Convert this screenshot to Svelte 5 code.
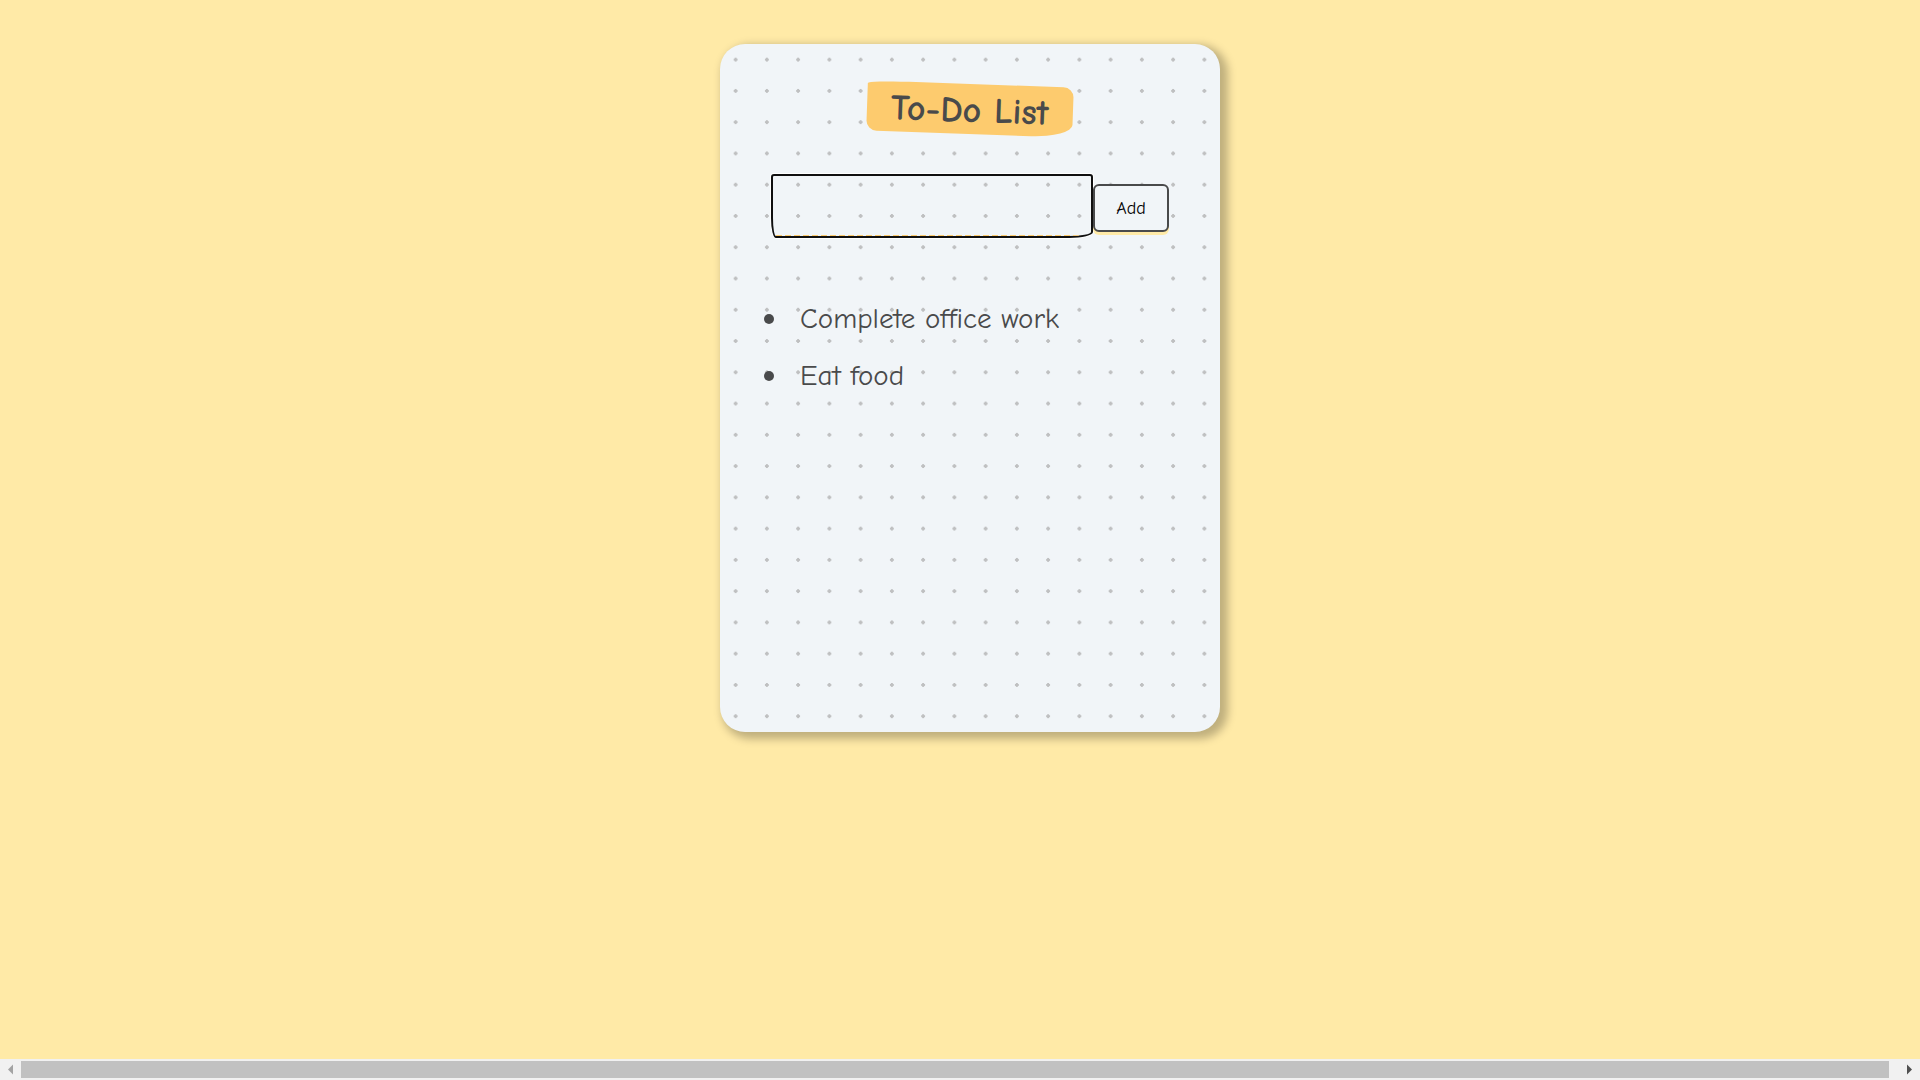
<script>
  let items = $state(['Complete office work', 'Eat food']);
  let draft = $state('');

  function add(event) {
    event.preventDefault();
    const text = draft.trim();
    if (text) items.push(text);
    draft = '';
  }
</script>

<div class="page">
  <main>
    <div class="card">
      <h1>To-Do List</h1>
      <form onsubmit={add}>
        <div class="field">
          <input type="text" aria-label="New item" bind:value={draft} />
        </div>
        <button type="submit">Add</button>
      </form>
      <ul>
        {#each items as item}
          <li>{item}</li>
        {/each}
      </ul>
    </div>
  </main>

  <div class="scrollbar" aria-hidden="true">
    <svg class="arrow" viewBox="0 0 21 21"><path d="M8 10.5 13 5.5V15.5Z" fill="#a3a3a3" /></svg>
    <div class="thumb"></div>
    <svg class="arrow wide" viewBox="0 0 31 21"><path d="M23 10.5 18 5.5V15.5Z" fill="#505050" /></svg>
  </div>
</div>

<style>
  :global(body) {
    background: #ffeaa7;
    color: #494a4b;
    font-family: 'Comic Sans MS', 'Comic Neue', cursive, 'Noto Sans', sans-serif;
    font-variant-ligatures: none;
  }

  .page {
    display: flex;
    flex-direction: column;
    justify-content: space-between;
    min-height: 100vh;
  }

  main {
    display: flex;
    justify-content: center;
    padding: 44px 0 44px 20px;
  }

  .card {
    box-sizing: border-box;
    display: flex;
    flex-direction: column;
    width: 100%;
    max-width: 500px;
    min-height: 688px;
    padding: 40px;
    border-radius: 25px;
    background-color: #f1f5f8;
    background-image: radial-gradient(#bfc0c1 7.2%, transparent 0);
    background-size: calc(100% / 16) calc(100% / 22);
    box-shadow: 5px 4px 9px 3px #00000040;
  }

  h1 {
    align-self: center;
    margin: 0;
    padding: 4px 24px 0;
    border-radius: 20% 5% 20% 5% / 5% 20% 25% 20%;
    background: #fdcb6e;
    font-size: 36px;
    line-height: 46px;
    transform: rotate(2deg);
  }

  form {
    display: flex;
    align-items: flex-end;
    margin-top: 40px;
    padding: 0 11px;
  }

  .field {
    flex: 1;
    box-sizing: border-box;
    height: 64px;
    border: 2px solid #101010;
    border-radius: 3px 3px 24px 5px / 3px 3px 6px 20px;
    box-shadow: 0 0 0 1px #fff;
    overflow: hidden;
  }

  input {
    box-sizing: border-box;
    width: 100%;
    height: 100%;
    padding: 0 16px;
    border: 0;
    border-radius: 0;
    outline: 0;
    background: repeating-linear-gradient(90deg, transparent 0 3px, #fdcb6e 3px 9px) bottom / 100% 1px no-repeat;
    color: inherit;
    font: inherit;
    font-size: 24px;
  }

  button {
    width: 76px;
    height: 48px;
    margin-bottom: 6px;
    padding: 0;
    border: 2px solid #494a4b;
    border-radius: 6px;
    background: #f1f5f8;
    box-shadow: 0 3px 0 #ffeaa7;
    color: #000;
    font: inherit;
    font-size: 18px;
  }

  ul {
    display: grid;
    gap: 17px;
    margin: 61px 0 0;
    padding: 0 0 0 4px;
    list-style: none;
  }

  li {
    display: flex;
    align-items: center;
    gap: 26px;
    font-size: 29px;
    line-height: 40px;
  }

  li::before {
    content: '';
    width: 10px;
    height: 10px;
    border-radius: 50%;
    background: currentColor;
  }

  .scrollbar {
    display: flex;
    align-items: center;
    height: 21px;
    background: #f1f1f1;
  }

  .thumb {
    flex: 1;
    height: 17px;
    background: #c1c1c1;
  }

  .arrow {
    width: 21px;
    height: 21px;
  }

  .wide {
    width: 31px;
  }
</style>
